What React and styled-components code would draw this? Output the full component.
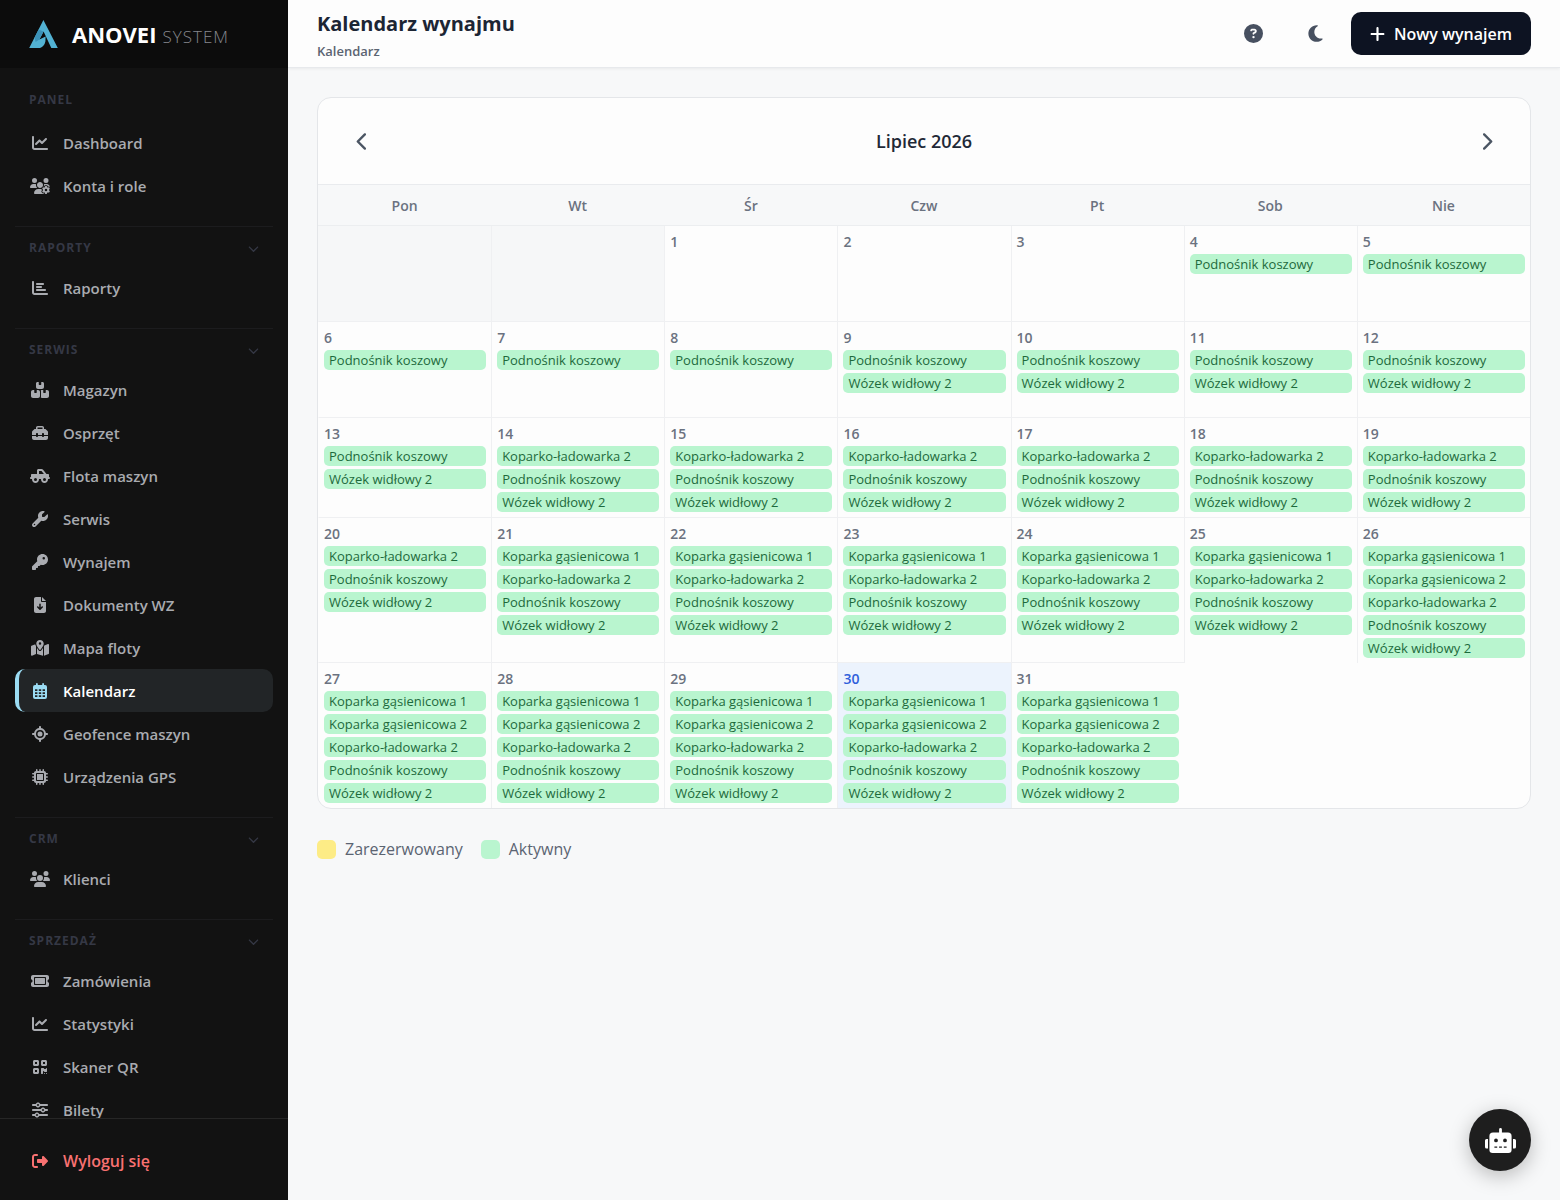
import React, {useState} from 'react';
import styled, {createGlobalStyle, css} from 'styled-components';
import {
  FaBoxesStacked,
  FaChartBar,
  FaChartLine,
  FaChevronDown,
  FaChevronLeft,
  FaChevronRight,
  FaCircleQuestion,
  FaFileArrowDown,
  FaKey,
  FaLocationCrosshairs,
  FaMapLocationDot,
  FaMicrochip,
  FaMoon,
  FaPlus,
  FaQrcode,
  FaRightFromBracket,
  FaSliders,
  FaTicket,
  FaToolbox,
  FaTruckPickup,
  FaUsers,
  FaUsersGear,
  FaWrench,
} from 'react-icons/fa6';

const GlobalStyle = createGlobalStyle`
  *, *::before, *::after {
    box-sizing: border-box;
  }

  body {
    margin: 0;
    background: #f7f8f9;
    color: #1f2937;
    font-family: 'Segoe UI', 'Open Sans', 'Noto Sans', sans-serif;
    font-size: 16px;
  }

  h1, h2, p, ul {
    margin: 0;
    padding: 0;
  }

  button {
    font-family: inherit;
    border: 0;
    padding: 0;
    background: none;
    cursor: pointer;
  }
`;

const Layout = styled.div`
  display: flex;
  height: 100vh;
`;

/* ---------- sidebar ---------- */

const Sidebar = styled.aside`
  display: flex;
  flex-direction: column;
  flex: 0 0 288px;
  height: 100vh;
  background: #121212;
`;

const Brand = styled.a`
  display: flex;
  align-items: center;
  gap: 14px;
  flex: none;
  height: 68px;
  padding: 0 29px;
  background: #0c0c0c;
  text-decoration: none;
`;

const BrandText = styled.span`
  display: flex;
  align-items: baseline;
  gap: 6px;
`;

const BrandName = styled.span`
  color: #ffffff;
  font-size: 22px;
  font-weight: 700;
`;

const BrandSuffix = styled.span`
  color: #85878c;
  font-size: 17px;
  font-weight: 300;
  letter-spacing: 1px;
`;

const Nav = styled.nav`
  flex: 1;
  min-height: 0;
  overflow: hidden;
  padding: 20px 15px 0;
`;

const Group = styled.section`
  & + & {
    margin-top: 19px;
    border-top: 1px solid #1c1c1e;
  }
`;

const groupTitle = css`
  color: #353845;
  font-size: 12px;
  font-weight: 700;
  line-height: 18px;
  letter-spacing: 1px;
  text-transform: uppercase;
`;

const GroupTitle = styled.h2`
  ${groupTitle}
  padding: 3px 14px 12px;
`;

const GroupToggle = styled.button`
  ${groupTitle}
  display: flex;
  align-items: center;
  justify-content: space-between;
  width: 100%;
  padding: 12px 14px 9px;

  svg {
    width: 11px;
    height: 11px;
  }
`;

const ItemList = styled.ul`
  list-style: none;
`;

const NavLink = styled.a`
  display: flex;
  align-items: center;
  height: 43px;
  padding-left: ${(props) => (props.$active ? 11 : 15)}px;
  border-left: ${(props) => (props.$active ? '4px solid #9bdcf3' : 'none')};
  border-radius: 10px;
  background: ${(props) => (props.$active ? '#222527' : 'transparent')};
  color: ${(props) => (props.$active ? '#ffffff' : props.$danger ? '#f87171' : '#a9abb0')};
  font-size: ${(props) => (props.$danger ? 16 : 15)}px;
  font-weight: 600;
  text-decoration: none;
`;

const ItemIcon = styled.span`
  display: flex;
  justify-content: center;
  width: 20px;
  margin-right: 13px;
  color: ${(props) => (props.$active ? '#9bdcf3' : 'inherit')};

  svg {
    flex: none;
    width: 20px;
    height: 16px;
  }
`;

const SidebarFooter = styled.div`
  flex: none;
  padding: 20px 15px 18px;
  border-top: 1px solid #262626;
`;

/* ---------- top bar ---------- */

const Main = styled.div`
  display: flex;
  flex-direction: column;
  flex: 1;
  min-width: 0;
`;

const TopBar = styled.header`
  display: flex;
  align-items: center;
  justify-content: space-between;
  height: 68px;
  padding: 0 29px;
  border-bottom: 1px solid #e7e9ec;
  background: #fdfdfd;
  box-shadow: 0 1px 3px rgba(0, 0, 0, 0.06);
`;

const Heading = styled.div`
  padding-top: 4px;
`;

const PageTitle = styled.h1`
  color: #1c2534;
  font-size: 20px;
  font-weight: 700;
  line-height: 30px;
`;

const Breadcrumb = styled.p`
  color: #5b6472;
  font-size: 13px;
  font-weight: 600;
  line-height: 24px;
`;

const Actions = styled.div`
  display: flex;
  align-items: center;
  gap: 8px;
`;

const RoundButton = styled.button`
  display: flex;
  align-items: center;
  justify-content: center;
  width: 54px;
  height: 43px;
  color: #475060;

  svg {
    width: 19px;
    height: 19px;
  }
`;

const PrimaryButton = styled.button`
  display: flex;
  align-items: center;
  gap: 9px;
  height: 43px;
  padding: 0 19px;
  border-radius: 10px;
  background: #0d1322;
  color: #ffffff;
  font-size: 16px;
  font-weight: 600;

  svg {
    width: 15px;
    height: 18px;
  }
`;

/* ---------- calendar ---------- */

const Content = styled.main`
  flex: 1;
  padding: 29px;
`;

const Card = styled.section`
  overflow: hidden;
  border: 1px solid #e4e6e9;
  border-radius: 14px;
  background: #fdfdfd;
`;

const MonthBar = styled.div`
  display: flex;
  align-items: center;
  justify-content: space-between;
  height: 86px;
  padding: 0 28px;
`;

const MonthName = styled.h2`
  color: #1f2937;
  font-size: 18px;
  font-weight: 600;
`;

const ArrowButton = styled.button`
  display: flex;
  align-items: center;
  justify-content: center;
  width: 32px;
  height: 43px;
  color: #4b5563;

  svg {
    width: 19px;
    height: 19px;
  }
`;

const MonthTable = styled.table`
  width: 100%;
  table-layout: fixed;
  border-collapse: separate;
  border-spacing: 0;
`;

const WeekDay = styled.th`
  height: 42px;
  padding: 0;
  border-top: 1px solid #e9ebee;
  border-bottom: 1px solid #eceef0;
  background: #f7f8f9;
  color: #6b7280;
  font-size: 14px;
  font-weight: 600;
`;

const Day = styled.td`
  height: 96px;
  padding: 6px 5px 5px;
  vertical-align: top;
  border-left: 1px solid ${(props) => (props.$first ? 'transparent' : '#eff0f2')};
  border-bottom: ${(props) => (props.$tail ? 'none' : '1px solid #eff0f2')};
  background: ${(props) => (props.$today ? '#ecf3fd' : props.$outside ? '#f6f7f8' : 'transparent')};
`;

const DayNumber = styled.div`
  margin-bottom: 2px;
  color: ${(props) => (props.$today ? '#2f5fdb' : '#6b7280')};
  font-size: 14px;
  font-weight: 600;
  line-height: 20px;
`;

const Rental = styled.div`
  height: 20px;
  padding: 0 5px;
  border-radius: 5px;
  background: #b9f5cf;
  color: #1d6a3c;
  font-size: 13px;
  line-height: 20px;
  white-space: nowrap;
  overflow: hidden;
  text-overflow: ellipsis;

  & + & {
    margin-top: 3px;
  }
`;

const Legend = styled.ul`
  display: flex;
  gap: 18px;
  margin-top: 28px;
  list-style: none;
`;

const LegendItem = styled.li`
  display: flex;
  align-items: center;
  gap: 9px;
  color: #5b6472;
  font-size: 16px;
  line-height: 24px;

  &::before {
    content: '';
    width: 19px;
    height: 19px;
    border-radius: 5px;
    background: ${(props) => props.$color};
  }
`;

const ChatButton = styled.button`
  position: fixed;
  right: 29px;
  bottom: 29px;
  display: flex;
  align-items: center;
  justify-content: center;
  width: 62px;
  height: 62px;
  border-radius: 50%;
  background: #1e1e1e;
  color: #ffffff;
  box-shadow: 0 5px 20px rgba(0, 0, 0, 0.25);

  svg {
    width: 31px;
    height: 25px;
  }
`;

const CalendarIcon = () => (
  <svg viewBox="0 0 20 16" fill="currentColor" aria-hidden="true">
    <path
      fillRule="evenodd"
      d="M6 0.9a0.9 0.9 0 0 1 1.8 0V2h4.4V0.9a0.9 0.9 0 0 1 1.8 0V2h1a2 2 0 0 1 2 2v10a2 2 0 0 1-2 2H5a2 2 0 0 1-2-2V4a2 2 0 0 1 2-2h1z
        M5 6.2v1.8h2.4V6.2z M8.8 6.2v1.8h2.4V6.2z M12.6 6.2v1.8H15V6.2z
        M5 9.2v1.8h2.4V9.2z M8.8 9.2v1.8h2.4V9.2z M12.6 9.2v1.8H15V9.2z
        M5 12.2v1.8h2.4v-1.8z M8.8 12.2v1.8h2.4v-1.8z M12.6 12.2v1.8H15v-1.8z"
    />
  </svg>
);

const RobotIcon = () => (
  <svg viewBox="0 0 31 25" fill="currentColor" aria-hidden="true">
    <path
      fillRule="evenodd"
      d="M14.1 1.4a1.4 1.4 0 0 1 2.8 0V4.6h6.1a3.6 3.6 0 0 1 3.6 3.6v13.6a3.2 3.2 0 0 1-3.2 3.2H7.6a3.2 3.2 0 0 1-3.2-3.2V8.2A3.6 3.6 0 0 1 8 4.6h6.1z
        M9.1 12.4a1.9 1.9 0 1 0 3.8 0a1.9 1.9 0 1 0-3.8 0z
        M18.1 12.4a1.9 1.9 0 1 0 3.8 0a1.9 1.9 0 1 0-3.8 0z
        M9.4 18.4v1.4h2.8v-1.4z M14.1 18.4v1.4h2.8v-1.4z M18.8 18.4v1.4h2.8v-1.4z"
    />
    <path d="M3 11v9.4H1.5A1.5 1.5 0 0 1 0 18.9v-6.4A1.5 1.5 0 0 1 1.5 11z"/>
    <path d="M28 11v9.4h1.5a1.5 1.5 0 0 0 1.5-1.5v-6.4a1.5 1.5 0 0 0-1.5-1.5z"/>
  </svg>
);

const Logo = () => (
  <svg width="29" height="29" viewBox="0 0 29 29" aria-hidden="true">
    <path d="M14.4 0 L28.8 28 H22.3 L14.6 11.5 L10.4 19.6 L16.6 16.6 L16.4 21.6 Q15.4 26.4 11 28 H0.2 Z" fill="#52b2d3"/>
    <path d="M9.6 9.6 L14.6 11.5 L10.4 19.6 L6.6 22 L5.6 17.4 Z" fill="#3c92b8"/>
  </svg>
);

const groups = [
  {
    name: 'Panel',
    fixed: true,
    items: [
      {label: 'Dashboard', icon: FaChartLine},
      {label: 'Konta i role', icon: FaUsersGear},
    ],
  },
  {
    name: 'Raporty',
    items: [{label: 'Raporty', icon: FaChartBar}],
  },
  {
    name: 'Serwis',
    items: [
      {label: 'Magazyn', icon: FaBoxesStacked},
      {label: 'Osprzęt', icon: FaToolbox},
      {label: 'Flota maszyn', icon: FaTruckPickup},
      {label: 'Serwis', icon: FaWrench},
      {label: 'Wynajem', icon: FaKey},
      {label: 'Dokumenty WZ', icon: FaFileArrowDown},
      {label: 'Mapa floty', icon: FaMapLocationDot},
      {label: 'Kalendarz', icon: CalendarIcon, active: true},
      {label: 'Geofence maszyn', icon: FaLocationCrosshairs},
      {label: 'Urządzenia GPS', icon: FaMicrochip},
    ],
  },
  {
    name: 'CRM',
    items: [{label: 'Klienci', icon: FaUsers}],
  },
  {
    name: 'Sprzedaż',
    items: [
      {label: 'Zamówienia', icon: FaTicket},
      {label: 'Statystyki', icon: FaChartLine},
      {label: 'Skaner QR', icon: FaQrcode},
      {label: 'Bilety', icon: FaSliders},
    ],
  },
];

const weekDays = ['Pon', 'Wt', 'Śr', 'Czw', 'Pt', 'Sob', 'Nie'];

// from/to are days of July 2026
const rentals = [
  {name: 'Koparka gąsienicowa 1', from: 21, to: 31},
  {name: 'Koparka gąsienicowa 2', from: 26, to: 31},
  {name: 'Koparko-ładowarka 2', from: 14, to: 31},
  {name: 'Podnośnik koszowy', from: 4, to: 31},
  {name: 'Wózek widłowy 2', from: 9, to: 31},
];

const TODAY = 30;
const OFFSET = 2;
const DAYS = 31;

const cells = [];
for (let i = 0; i < OFFSET + DAYS; i++) {
  cells.push(i < OFFSET ? null : i - OFFSET + 1);
}

const weeks = [];
for (let i = 0; i < cells.length; i += 7) {
  weeks.push(cells.slice(i, i + 7));
}

const NavItem = ({item}) => {
  const Icon = item.icon;
  return (
    <li>
      <NavLink href="#" $active={item.active} aria-current={item.active ? 'page' : undefined}>
        <ItemIcon $active={item.active}><Icon/></ItemIcon>
        {item.label}
      </NavLink>
    </li>
  );
};

const NavGroup = ({group}) => {
  const [open, setOpen] = useState(true);
  return (
    <Group>
      {group.fixed ? (
        <GroupTitle>{group.name}</GroupTitle>
      ) : (
        <GroupToggle type="button" aria-expanded={open} onClick={() => setOpen(!open)}>
          {group.name}
          <FaChevronDown/>
        </GroupToggle>
      )}
      {open && (
        <ItemList>
          {group.items.map((item) => <NavItem key={item.label} item={item}/>)}
        </ItemList>
      )}
    </Group>
  );
};

const DayCell = ({day, index}) => {
  const isToday = day === TODAY;
  return (
    <Day
      $first={index % 7 === 0}
      $tail={index >= cells.length - 7}
      $outside={day === null}
      $today={isToday}
    >
      {day !== null && (
        <>
          <DayNumber $today={isToday}>{day}</DayNumber>
          {rentals
            .filter((r) => day >= r.from && day <= r.to)
            .map((r) => <Rental key={r.name}>{r.name}</Rental>)}
        </>
      )}
    </Day>
  );
};

const App = () => (
  <Layout>
    <GlobalStyle/>
    <Sidebar>
      <Brand href="#">
        <Logo/>
        <BrandText>
          <BrandName>ANOVEI</BrandName>
          <BrandSuffix>SYSTEM</BrandSuffix>
        </BrandText>
      </Brand>
      <Nav>
        {groups.map((group) => <NavGroup key={group.name} group={group}/>)}
      </Nav>
      <SidebarFooter>
        <NavLink href="#" $danger>
          <ItemIcon><FaRightFromBracket/></ItemIcon>
          Wyloguj się
        </NavLink>
      </SidebarFooter>
    </Sidebar>
    <Main>
      <TopBar>
        <Heading>
          <PageTitle>Kalendarz wynajmu</PageTitle>
          <Breadcrumb>Kalendarz</Breadcrumb>
        </Heading>
        <Actions>
          <RoundButton type="button" aria-label="Pomoc"><FaCircleQuestion/></RoundButton>
          <RoundButton type="button" aria-label="Tryb ciemny"><FaMoon/></RoundButton>
          <PrimaryButton type="button"><FaPlus/>Nowy wynajem</PrimaryButton>
        </Actions>
      </TopBar>
      <Content>
        <Card>
          <MonthBar>
            <ArrowButton type="button" aria-label="Poprzedni miesiąc"><FaChevronLeft/></ArrowButton>
            <MonthName>Lipiec 2026</MonthName>
            <ArrowButton type="button" aria-label="Następny miesiąc"><FaChevronRight/></ArrowButton>
          </MonthBar>
          <MonthTable>
            <thead>
              <tr>{weekDays.map((d) => <WeekDay key={d} scope="col">{d}</WeekDay>)}</tr>
            </thead>
            <tbody>
              {weeks.map((week, w) => (
                <tr key={w}>
                  {week.map((day, d) => <DayCell key={d} day={day} index={w * 7 + d}/>)}
                </tr>
              ))}
            </tbody>
          </MonthTable>
        </Card>
        <Legend>
          <LegendItem $color="#fdec86">Zarezerwowany</LegendItem>
          <LegendItem $color="#b9f5cf">Aktywny</LegendItem>
        </Legend>
      </Content>
    </Main>
    <ChatButton type="button" aria-label="Asystent"><RobotIcon/></ChatButton>
  </Layout>
);

export default App;
